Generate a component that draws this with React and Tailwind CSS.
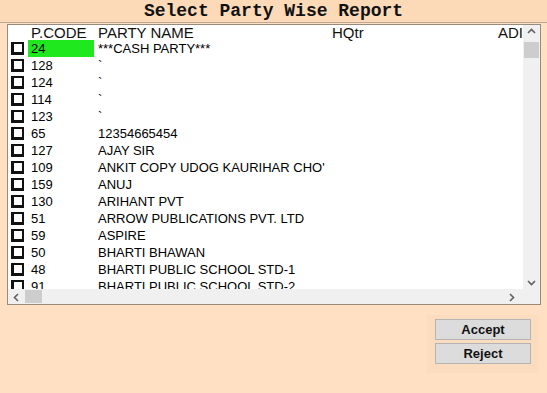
import React from "react";

const rows = [
  ["24", "***CASH PARTY***"],
  ["128", "`"],
  ["124", "`"],
  ["114", "`"],
  ["123", "`"],
  ["65", "12354665454"],
  ["127", "AJAY SIR"],
  ["109", "ANKIT COPY UDOG KAURIHAR CHO'"],
  ["159", "ANUJ"],
  ["130", "ARIHANT PVT"],
  ["51", "ARROW PUBLICATIONS PVT. LTD"],
  ["59", "ASPIRE"],
  ["50", "BHARTI BHAWAN"],
  ["48", "BHARTI PUBLIC SCHOOL STD-1"],
  ["91", "BHARTI PUBLIC SCHOOL STD-2"],
];

function Check() {
  return (
    <div className="w-[13px] h-[13px] bg-white border-2 border-l-[3px] border-b-[3px] border-[#111] shrink-0" />
  );
}

export default function App() {
  return (
    <div
      className="w-[547px] h-[393px] bg-[#ffe0c3] overflow-hidden flex flex-col"
      style={{ fontFamily: '"Liberation Sans", Arial, sans-serif' }}
    >
      <div className="h-[23px] shrink-0 flex items-center justify-center bg-[#fcdab8] border-b border-[#b8a898]">
        <span
          className="text-[18px] font-bold text-[#111] leading-none"
          style={{ fontFamily: '"Liberation Mono", "Courier New", monospace' }}
        >
          Select Party Wise Report
        </span>
      </div>

      <div className="ml-[7px] mt-px w-[534px] h-[281px] border border-[#9a8a7a] bg-white grid grid-cols-[1fr_17px] grid-rows-[1fr_15px] overflow-hidden">
        <div className="overflow-hidden relative">
          <div className="h-[15px] flex items-end text-[15px] leading-none text-[#111] whitespace-nowrap">
            <span className="w-[90px] pl-[23px]">P.CODE</span>
            <span className="w-[234px]">PARTY NAME</span>
            <span className="w-[166px]">HQtr</span>
            <span>ADI</span>
          </div>
          {rows.map(([code, name], i) => (
            <div key={i} className="h-[17px] flex items-center text-[13px] text-black whitespace-nowrap">
              <div className="w-[20px] pl-[3px] flex items-center">
                <Check />
              </div>
              <div
                className={
                  "w-[66px] h-[17px] pl-[3px] flex items-center " +
                  (i === 0 ? "bg-[#1fe81f]" : "")
                }
              >
                {code}
              </div>
              <div className="pl-[4px]">{name}</div>
            </div>
          ))}
        </div>

        <div className="bg-[#f0f0f0] relative">
          <svg className="absolute left-[4px] top-[3px]" width="9" height="6" viewBox="0 0 9 6">
            <path d="M1 5 L4.5 1.5 L8 5" fill="none" stroke="#606060" strokeWidth="1.6" />
          </svg>
          <div className="absolute left-[1px] top-[17px] w-[15px] h-[16px] bg-[#cdcdcd]" />
          <svg className="absolute left-[4px] bottom-[3px]" width="9" height="6" viewBox="0 0 9 6">
            <path d="M1 1 L4.5 4.5 L8 1" fill="none" stroke="#606060" strokeWidth="1.6" />
          </svg>
        </div>

        <div className="bg-[#f0f0f0] relative">
          <svg className="absolute left-[5px] top-[4px]" width="6" height="9" viewBox="0 0 6 9">
            <path d="M5 1 L1.5 4.5 L5 8" fill="none" stroke="#606060" strokeWidth="1.6" />
          </svg>
          <div className="absolute left-[17px] top-[1px] w-[17px] h-[13px] bg-[#cdcdcd]" />
          <svg className="absolute right-[8px] top-[4px]" width="6" height="9" viewBox="0 0 6 9">
            <path d="M1 1 L4.5 4.5 L1 8" fill="none" stroke="#606060" strokeWidth="1.6" />
          </svg>
        </div>
        <div className="bg-[#f0f0f0]" />
      </div>

      <div className="ml-[427px] mt-[10px] w-[112px] h-[58px] bg-[#fcdcbe] rounded-[2px] flex flex-col items-center pt-[4px] gap-[3px]">
        <div className="w-[96px] h-[21px] bg-[#dcdcdc] border border-[#b4b4b4] flex items-center justify-center text-[13px] font-bold text-[#111]">
          Accept
        </div>
        <div className="w-[96px] h-[21px] bg-[#dcdcdc] border border-[#b4b4b4] flex items-center justify-center text-[13px] font-bold text-[#111]">
          Reject
        </div>
      </div>
    </div>
  );
}
